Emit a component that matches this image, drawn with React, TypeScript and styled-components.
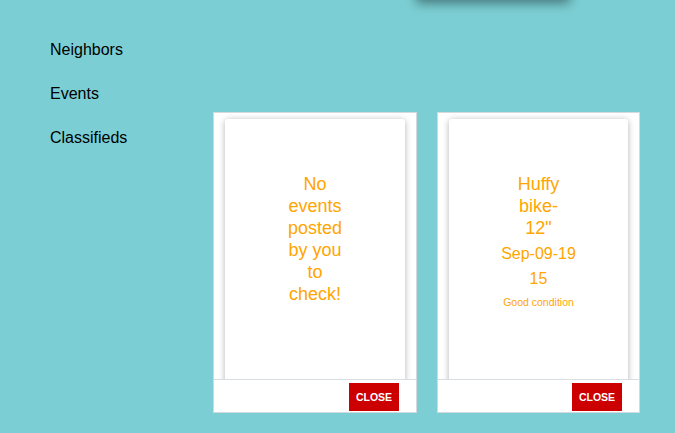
import styled, { createGlobalStyle } from "styled-components";

const Global = createGlobalStyle`
body {
    margin: 0;
    background-color: #7bcfd4;
    font-family: "Liberation Sans", Arial, sans-serif;
}
`;

const Page = styled.div`
min-height: 433px;
overflow: hidden;
`;

// box sitting above the viewport, only its shadow shows
const TopMenu = styled.div`
margin: -24px 0 0 416px;
width: 154px;
height: 24px;
background-color: #7bcfd4;
box-shadow: 0 3px 12px rgba(0, 0, 0, 0.45);
`;

const Main = styled.div`
display: flex;
`;

const Nav = styled.nav`
width: 163px;
padding: 41px 0 0 50px;
display: flex;
flex-direction: column;
gap: 26px;
`;

const NavItem = styled.a`
font-size: 16px;
line-height: 18px;
color: #000;
text-decoration: none;
`;

const Cards = styled.div`
display: flex;
gap: 20px;
padding-top: 112px;
align-items: flex-start;
`;

const Modal = styled.div`
box-sizing: border-box;
width: ${(p: { $w: number }) => p.$w}px;
height: 301px;
background: #fff;
border: 1px solid #d3d9dd;
display: flex;
flex-direction: column;
`;

const Body = styled.div`
box-sizing: border-box;
height: 266px;
overflow: hidden;
padding: 6px 11px 0;
`;

const Card = styled.div`
height: 320px;
background: #fff;
border-radius: 3px;
box-shadow: 0 1px 6px rgba(0, 0, 0, 0.3);
padding-top: 54px;
box-sizing: border-box;
text-align: center;
color: #ffa500;
`;

const Title = styled.h3`
width: 62px;
margin: 0 auto;
font-size: 18px;
line-height: 22px;
font-weight: normal;
`;

const Line = styled.p`
margin: ${(p: { $top: number }) => p.$top}px 0 0;
font-size: 16px;
line-height: 18px;
`;

const Note = styled.p`
margin: 8px 0 0;
font-size: 10.5px;
line-height: 13px;
`;

const Footer = styled.div`
flex: 1;
border-top: 1px solid #d9dee2;
display: flex;
justify-content: flex-end;
align-items: center;
padding: 1px 17px 0 0;
`;

const CloseButton = styled.button`
width: 50px;
height: 28px;
border: none;
background: #cc0000;
color: #fff;
font-family: "Liberation Sans", Arial, sans-serif;
font-weight: bold;
font-size: 10.5px;
padding: 0;
cursor: pointer;
`;

const App = (): JSX.Element => {
    return (<Page>
        <Global />
        <TopMenu />
        <Main>
            <Nav>
                <NavItem href="#">Neighbors</NavItem>
                <NavItem href="#">Events</NavItem>
                <NavItem href="#">Classifieds</NavItem>
            </Nav>
            <Cards>
                <Modal $w={204}>
                    <Body>
                        <Card>
                            <Title>No events posted by you to check!</Title>
                        </Card>
                    </Body>
                    <Footer><CloseButton>CLOSE</CloseButton></Footer>
                </Modal>
                <Modal $w={203}>
                    <Body>
                        <Card>
                            <Title>Huffy bike- 12"</Title>
                            <Line $top={6}>Sep-09-19</Line>
                            <Line $top={7}>15</Line>
                            <Note>Good condition</Note>
                        </Card>
                    </Body>
                    <Footer><CloseButton>CLOSE</CloseButton></Footer>
                </Modal>
            </Cards>
        </Main>
    </Page>);
};

export default App;
